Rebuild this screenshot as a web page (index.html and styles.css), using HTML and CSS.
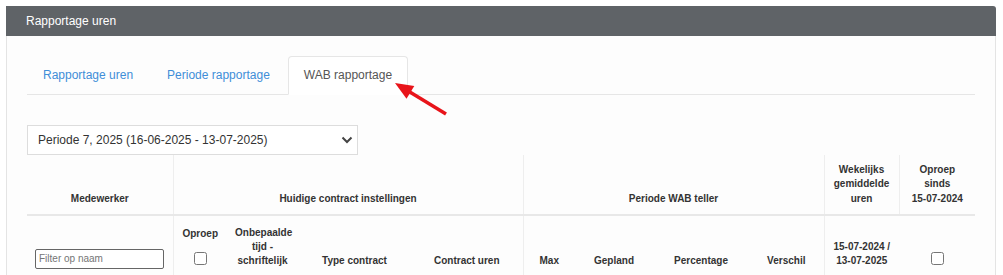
FILE: index.html
```html
<!DOCTYPE html>
<html lang="nl">
  <head>
    <meta charset="UTF-8" />
    <meta name="viewport" content="width=device-width, initial-scale=1.0" />
    <title>Rapportage uren</title>
    <link rel="stylesheet" href="styles.css">
  </head>
  <body>
    <div class="panel">
      <div class="panel-heading">Rapportage uren</div>
      <div class="panel-body">
        <!-- Tabs -->
        <ul class="nav-tabs">
          <li><a href="#">Rapportage uren</a></li>
          <li><a href="#">Periode rapportage</a></li>
          <li class="active"><a href="#">WAB rapportage</a></li>
        </ul>

        <div class="tab-content">
          <!-- Period select -->
          <div class="select-wrap">
            <select class="period-select">
              <option>Periode 7, 2025 (16-06-2025 - 13-07-2025)</option>
            </select>
            <svg class="chevron" width="12" height="8" viewBox="0 0 12 8">
              <path d="M1.5 1.5 L6 6 L10.5 1.5" fill="none" stroke="#444" stroke-width="2" />
            </svg>
          </div>

          <!-- WAB table -->
          <table class="wab-table">
            <colgroup>
              <col style="width: 146px" />
              <col style="width: 54px" />
              <col style="width: 71px" />
              <col style="width: 113px" />
              <col style="width: 112px" />
              <col style="width: 52px" />
              <col style="width: 78px" />
              <col style="width: 96px" />
              <col style="width: 75px" />
              <col style="width: 75px" />
              <col style="width: 76px" />
            </colgroup>
            <thead>
              <tr class="group-row">
                <th>Medewerker</th>
                <th colspan="4" class="sep">Huidige contract instellingen</th>
                <th colspan="4" class="sep">Periode WAB teller</th>
                <th class="sep">Wekelijks gemiddelde uren</th>
                <th class="sep">Oproep sinds <span class="nowrap">15-07-2024</span></th>
              </tr>
              <tr class="sub-row">
                <th class="filter-cell">
                  <input type="text" class="filter-input" placeholder="Filter op naam" />
                </th>
                <th class="sep">
                  <div>Oproep</div>
                  <input type="checkbox" class="check" />
                </th>
                <th>Onbepaalde tijd - schriftelijk</th>
                <th>Type contract</th>
                <th>Contract uren</th>
                <th class="sep">Max</th>
                <th>Gepland</th>
                <th>Percentage</th>
                <th>Verschil</th>
                <th class="sep"><span class="nowrap">15-07-2024</span> / <span class="nowrap">13-07-2025</span></th>
                <th>
                  <input type="checkbox" class="check" />
                </th>
              </tr>
            </thead>
          </table>
        </div>
      </div>
    </div>

    <!-- Annotation arrow pointing at the active tab -->
    <svg class="arrow" width="60" height="40" viewBox="0 0 60 40">
      <line x1="56" y1="36" x2="19" y2="13.5" stroke="#e8141a" stroke-width="3.5" />
      <polygon points="5,5 24.3,7.9 16.5,20.7" fill="#e8141a" />
    </svg>
  </body>
</html>
```

FILE: styles.css
```css
body {
  margin: 0;
  padding: 6px 0 0 6px;
  font-family: "Liberation Sans", Arial, sans-serif;
  font-size: 12px;
  line-height: 1.42857;
  color: #333333;
  background-color: #ffffff;
}

/* Panel */
.panel {
  width: 990px;
}

.panel-heading {
  height: 30px;
  line-height: 30px;
  padding: 0 20px;
  background-color: #5f6367;
  color: #ffffff;
  font-size: 12px;
  border-radius: 0 3px 0 0;
}

.panel-body {
  padding: 20px 20px 40px;
  border-left: 1px solid #e4e4e4;
  border-right: 1px solid #e4e4e4;
  background-color: #fdfdfd;
}

/* Tabs */
.nav-tabs {
  display: flex;
  list-style: none;
  margin: 0;
  padding: 0;
  border-bottom: 1px solid #e6e6e6;
}

.nav-tabs li {
  margin-right: 2px;
  margin-bottom: -1px;
}

.nav-tabs a {
  display: block;
  padding: 10px 15px;
  line-height: 17px;
  border: 1px solid transparent;
  border-radius: 4px 4px 0 0;
  color: #3f8ed8;
  text-decoration: none;
}

.nav-tabs .active a {
  color: #555555;
  background-color: #ffffff;
  border-color: #e6e6e6 #e6e6e6 transparent;
}

.tab-content {
  padding-top: 30px;
}

/* Period select */
.select-wrap {
  position: relative;
  width: 331px;
}

.period-select {
  appearance: none;
  -webkit-appearance: none;
  display: block;
  width: 331px;
  height: 30px;
  padding: 0 10px;
  border: 1px solid #dddddd;
  border-radius: 0;
  background-color: #ffffff;
  color: #333333;
  font-family: inherit;
  font-size: 12px;
}

.chevron {
  position: absolute;
  right: 5px;
  top: 11px;
}

/* Table */
.wab-table {
  width: 948px;
  table-layout: fixed;
  border-collapse: collapse;
}

.wab-table th {
  padding: 8px;
  font-size: 10px;
  font-weight: bold;
  line-height: 1.42857;
  text-align: center;
  vertical-align: bottom;
  color: #333333;
}

.group-row th {
  border-bottom: 2px solid #e8e8e8;
}

.sub-row th {
  padding-top: 10px;
}

.wab-table th.sep {
  border-left: 1px solid #eeeeee;
}

.nowrap {
  white-space: nowrap;
}

.filter-cell {
  text-align: left;
}

.filter-input {
  display: block;
  box-sizing: border-box;
  width: 129px;
  height: 20px;
  margin: 0;
  padding: 0 3px;
  border: 1px solid #666666;
  border-radius: 2px;
  font-family: inherit;
  font-size: 10px;
}

.filter-input::placeholder {
  color: #757575;
}

.check {
  display: block;
  width: 13px;
  height: 13px;
  margin: 10px auto 4px;
}

/* Annotation */
.arrow {
  position: absolute;
  left: 390px;
  top: 78px;
}
```
